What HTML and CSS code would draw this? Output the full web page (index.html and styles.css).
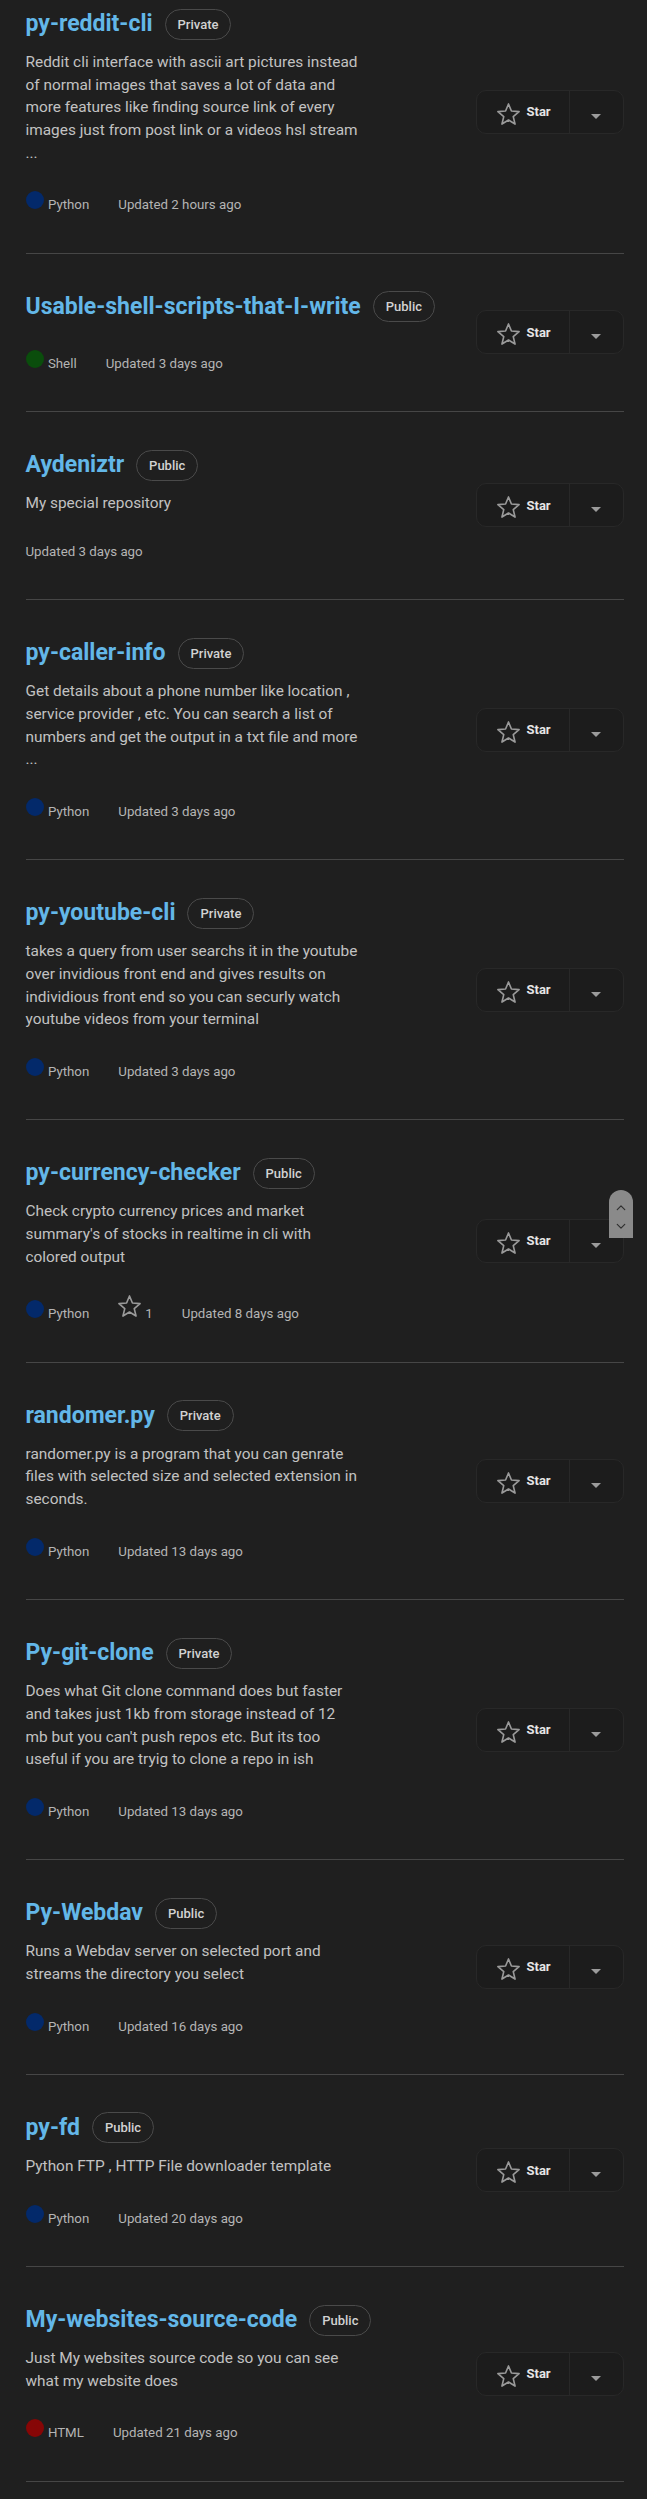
FILE: index.html
```html
<!DOCTYPE html>
<html lang="en">
<head>
<meta charset="utf-8">
<title>Repositories</title>
<link rel="stylesheet" href="styles.css">
</head>
<body>
<main class="repo-list">

  <article class="repo">
    <div class="repo-info">
      <div class="repo-head"><a class="repo-name" href="#">py-reddit-cli</a><span class="badge">Private</span></div>
      <p class="repo-desc">Reddit cli interface with ascii art pictures instead of normal images that saves a lot of data and more features like finding source link of every images just from post link or a videos hsl stream ...</p>
      <div class="repo-meta"><span class="lang"><span class="dot dot-python"></span>Python</span><span>Updated 2 hours ago</span></div>
    </div>
    <div class="star-btn"><button class="star-main"><svg class="star-icon" viewBox="0 0 24 24"><polygon points="12,1 15.06,8.39 23.03,9.02 16.95,14.21 18.82,21.98 12,17.8 5.18,21.98 7.05,14.21 0.97,9.02 8.94,8.39"/></svg><span>Star</span></button><button class="star-menu"><span class="caret"></span></button></div>
  </article>

  <article class="repo">
    <div class="repo-info">
      <div class="repo-head"><a class="repo-name" href="#">Usable-shell-scripts-that-I-write</a><span class="badge">Public</span></div>
      <div class="repo-meta"><span class="lang"><span class="dot dot-shell"></span>Shell</span><span>Updated 3 days ago</span></div>
    </div>
    <div class="star-btn"><button class="star-main"><svg class="star-icon" viewBox="0 0 24 24"><polygon points="12,1 15.06,8.39 23.03,9.02 16.95,14.21 18.82,21.98 12,17.8 5.18,21.98 7.05,14.21 0.97,9.02 8.94,8.39"/></svg><span>Star</span></button><button class="star-menu"><span class="caret"></span></button></div>
  </article>

  <article class="repo">
    <div class="repo-info">
      <div class="repo-head"><a class="repo-name" href="#">Aydeniztr</a><span class="badge">Public</span></div>
      <p class="repo-desc">My special repository</p>
      <div class="repo-meta"><span>Updated 3 days ago</span></div>
    </div>
    <div class="star-btn"><button class="star-main"><svg class="star-icon" viewBox="0 0 24 24"><polygon points="12,1 15.06,8.39 23.03,9.02 16.95,14.21 18.82,21.98 12,17.8 5.18,21.98 7.05,14.21 0.97,9.02 8.94,8.39"/></svg><span>Star</span></button><button class="star-menu"><span class="caret"></span></button></div>
  </article>

  <article class="repo">
    <div class="repo-info">
      <div class="repo-head"><a class="repo-name" href="#">py-caller-info</a><span class="badge">Private</span></div>
      <p class="repo-desc">Get details about a phone number like location , service provider , etc. You can search a list of numbers and get the output in a txt file and more ...</p>
      <div class="repo-meta"><span class="lang"><span class="dot dot-python"></span>Python</span><span>Updated 3 days ago</span></div>
    </div>
    <div class="star-btn"><button class="star-main"><svg class="star-icon" viewBox="0 0 24 24"><polygon points="12,1 15.06,8.39 23.03,9.02 16.95,14.21 18.82,21.98 12,17.8 5.18,21.98 7.05,14.21 0.97,9.02 8.94,8.39"/></svg><span>Star</span></button><button class="star-menu"><span class="caret"></span></button></div>
  </article>

  <article class="repo">
    <div class="repo-info">
      <div class="repo-head"><a class="repo-name" href="#">py-youtube-cli</a><span class="badge">Private</span></div>
      <p class="repo-desc">takes a query from user searchs it in the youtube over invidious front end and gives results on individious front end so you can securly watch youtube videos from your terminal</p>
      <div class="repo-meta"><span class="lang"><span class="dot dot-python"></span>Python</span><span>Updated 3 days ago</span></div>
    </div>
    <div class="star-btn"><button class="star-main"><svg class="star-icon" viewBox="0 0 24 24"><polygon points="12,1 15.06,8.39 23.03,9.02 16.95,14.21 18.82,21.98 12,17.8 5.18,21.98 7.05,14.21 0.97,9.02 8.94,8.39"/></svg><span>Star</span></button><button class="star-menu"><span class="caret"></span></button></div>
  </article>

  <article class="repo">
    <div class="repo-info">
      <div class="repo-head"><a class="repo-name" href="#">py-currency-checker</a><span class="badge">Public</span></div>
      <p class="repo-desc">Check crypto currency prices and market summary's of stocks in realtime in cli with colored output</p>
      <div class="repo-meta"><span class="lang"><span class="dot dot-python"></span>Python</span><span class="stars"><svg class="meta-star" viewBox="0 0 24 24"><polygon points="12,1 15.06,8.39 23.03,9.02 16.95,14.21 18.82,21.98 12,17.8 5.18,21.98 7.05,14.21 0.97,9.02 8.94,8.39"/></svg>1</span><span>Updated 8 days ago</span></div>
    </div>
    <div class="star-btn"><button class="star-main"><svg class="star-icon" viewBox="0 0 24 24"><polygon points="12,1 15.06,8.39 23.03,9.02 16.95,14.21 18.82,21.98 12,17.8 5.18,21.98 7.05,14.21 0.97,9.02 8.94,8.39"/></svg><span>Star</span></button><button class="star-menu"><span class="caret"></span></button></div>
  </article>

  <article class="repo">
    <div class="repo-info">
      <div class="repo-head"><a class="repo-name" href="#">randomer.py</a><span class="badge">Private</span></div>
      <p class="repo-desc">randomer.py is a program that you can genrate files with selected size and selected extension in seconds.</p>
      <div class="repo-meta"><span class="lang"><span class="dot dot-python"></span>Python</span><span>Updated 13 days ago</span></div>
    </div>
    <div class="star-btn"><button class="star-main"><svg class="star-icon" viewBox="0 0 24 24"><polygon points="12,1 15.06,8.39 23.03,9.02 16.95,14.21 18.82,21.98 12,17.8 5.18,21.98 7.05,14.21 0.97,9.02 8.94,8.39"/></svg><span>Star</span></button><button class="star-menu"><span class="caret"></span></button></div>
  </article>

  <article class="repo">
    <div class="repo-info">
      <div class="repo-head"><a class="repo-name" href="#">Py-git-clone</a><span class="badge">Private</span></div>
      <p class="repo-desc">Does what Git clone command does but faster and takes just 1kb from storage instead of 12 mb but you can't push repos etc. But its too useful if you are tryig to clone a repo in ish</p>
      <div class="repo-meta"><span class="lang"><span class="dot dot-python"></span>Python</span><span>Updated 13 days ago</span></div>
    </div>
    <div class="star-btn"><button class="star-main"><svg class="star-icon" viewBox="0 0 24 24"><polygon points="12,1 15.06,8.39 23.03,9.02 16.95,14.21 18.82,21.98 12,17.8 5.18,21.98 7.05,14.21 0.97,9.02 8.94,8.39"/></svg><span>Star</span></button><button class="star-menu"><span class="caret"></span></button></div>
  </article>

  <article class="repo">
    <div class="repo-info">
      <div class="repo-head"><a class="repo-name" href="#">Py-Webdav</a><span class="badge">Public</span></div>
      <p class="repo-desc">Runs a Webdav server on selected port and streams the directory you select</p>
      <div class="repo-meta"><span class="lang"><span class="dot dot-python"></span>Python</span><span>Updated 16 days ago</span></div>
    </div>
    <div class="star-btn"><button class="star-main"><svg class="star-icon" viewBox="0 0 24 24"><polygon points="12,1 15.06,8.39 23.03,9.02 16.95,14.21 18.82,21.98 12,17.8 5.18,21.98 7.05,14.21 0.97,9.02 8.94,8.39"/></svg><span>Star</span></button><button class="star-menu"><span class="caret"></span></button></div>
  </article>

  <article class="repo">
    <div class="repo-info">
      <div class="repo-head"><a class="repo-name" href="#">py-fd</a><span class="badge">Public</span></div>
      <p class="repo-desc">Python FTP , HTTP File downloader template</p>
      <div class="repo-meta"><span class="lang"><span class="dot dot-python"></span>Python</span><span>Updated 20 days ago</span></div>
    </div>
    <div class="star-btn"><button class="star-main"><svg class="star-icon" viewBox="0 0 24 24"><polygon points="12,1 15.06,8.39 23.03,9.02 16.95,14.21 18.82,21.98 12,17.8 5.18,21.98 7.05,14.21 0.97,9.02 8.94,8.39"/></svg><span>Star</span></button><button class="star-menu"><span class="caret"></span></button></div>
  </article>

  <article class="repo">
    <div class="repo-info">
      <div class="repo-head"><a class="repo-name" href="#">My-websites-source-code</a><span class="badge">Public</span></div>
      <p class="repo-desc">Just My websites source code so you can see what my website does</p>
      <div class="repo-meta"><span class="lang"><span class="dot dot-html"></span>HTML</span><span>Updated 21 days ago</span></div>
    </div>
    <div class="star-btn"><button class="star-main"><svg class="star-icon" viewBox="0 0 24 24"><polygon points="12,1 15.06,8.39 23.03,9.02 16.95,14.21 18.82,21.98 12,17.8 5.18,21.98 7.05,14.21 0.97,9.02 8.94,8.39"/></svg><span>Star</span></button><button class="star-menu"><span class="caret"></span></button></div>
  </article>

</main>

<div class="scroll-nav">
  <svg class="chev" viewBox="0 0 12 8"><polyline points="1.5,6.5 6,2 10.5,6.5"/></svg>
  <svg class="chev" viewBox="0 0 12 8"><polyline points="1.5,1.5 6,6 10.5,1.5"/></svg>
</div>
</body>
</html>
```

FILE: styles.css
```css
html {
  background: #1f1f1f;
}

body {
  margin: 0;
  background: #1f1f1f;
  font-family: Roboto, "Noto Sans", "Liberation Sans", sans-serif;
  color: #c0c0c0;
  position: relative;
}

.repo-list {
  padding: 0 23.5px 0 25.5px;
}

.repo {
  display: flex;
  align-items: center;
  justify-content: space-between;
  padding: 37px 0 37.4px;
  border-bottom: 1px solid #464646;
}

.repo:first-child {
  padding-top: 8px;
}

.repo-info {
  flex: 1;
  min-width: 0;
}

.repo-head {
  display: flex;
  align-items: center;
  gap: 12px;
  height: 32px;
}

.repo-name {
  font-size: 23px;
  font-weight: 700;
  line-height: 32px;
  color: #63b7e8;
  text-decoration: none;
  white-space: nowrap;
}

.badge {
  border: 1px solid #4a4a4a;
  border-radius: 999px;
  padding: 6px 12px;
  font-size: 13px;
  font-weight: 500;
  line-height: 17px;
  color: #d2d2d2;
}

.repo-desc {
  margin: 11px 0 0;
  max-width: 334px;
  font-size: 15.4px;
  line-height: 22.67px;
  color: #c2c2c2;
}

.repo-meta {
  display: flex;
  align-items: baseline;
  gap: 29px;
  margin-top: 27px;
  font-size: 13.3px;
  line-height: 20px;
  color: #b4b4b4;
}

.lang {
  display: flex;
  align-items: baseline;
  gap: 4.4px;
}

.dot {
  width: 18px;
  height: 18px;
  border-radius: 50%;
  flex: none;
}

.dot-python { background: #03296a; }
.dot-shell  { background: #0a4d0c; }
.dot-html   { background: #860606; }

.stars {
  display: flex;
  align-items: baseline;
  gap: 4px;
}

.meta-star {
  width: 23px;
  height: 23px;
  overflow: visible;
  fill: none;
  stroke: #9a9a9a;
  stroke-width: 1.7;
  stroke-linejoin: round;
}

.star-btn {
  flex: none;
  display: flex;
  box-sizing: border-box;
  width: 148px;
  height: 44px;
  border: 1px solid #282828;
  border-radius: 10px;
  background: #1c1c1c;
}

.star-main,
.star-menu {
  border: 0;
  background: none;
  margin: 0;
  font-family: inherit;
  cursor: pointer;
}

.star-main {
  display: flex;
  align-items: center;
  gap: 7px;
  width: 93px;
  padding: 0 0 0 20px;
  border-right: 1px solid #282828;
  font-size: 13px;
  font-weight: 700;
  color: #e6e6e6;
}

.star-icon {
  width: 23px;
  height: 23px;
  margin-top: 5px;
  overflow: visible;
  fill: none;
  stroke: #9a9a9a;
  stroke-width: 1.7;
  stroke-linejoin: round;
  flex: none;
}

.star-menu {
  flex: 1;
  display: flex;
  align-items: center;
  justify-content: center;
  padding: 0;
}

.caret {
  width: 0;
  height: 0;
  margin-top: 9px;
  border-left: 5.3px solid transparent;
  border-right: 5.3px solid transparent;
  border-top: 5.5px solid #9b9b9b;
}

.scroll-nav {
  position: absolute;
  top: 1190px;
  left: 609px;
  width: 24px;
  height: 48px;
  box-sizing: border-box;
  padding-top: 14px;
  border-radius: 12px 12px 0 0;
  background: #8a8a8a;
  display: flex;
  flex-direction: column;
  align-items: center;
  gap: 12px;
}

.chev {
  width: 10px;
  height: 7px;
  fill: none;
  stroke: #2f2f2f;
  stroke-width: 1.4;
  stroke-linecap: round;
  stroke-linejoin: round;
}
```
